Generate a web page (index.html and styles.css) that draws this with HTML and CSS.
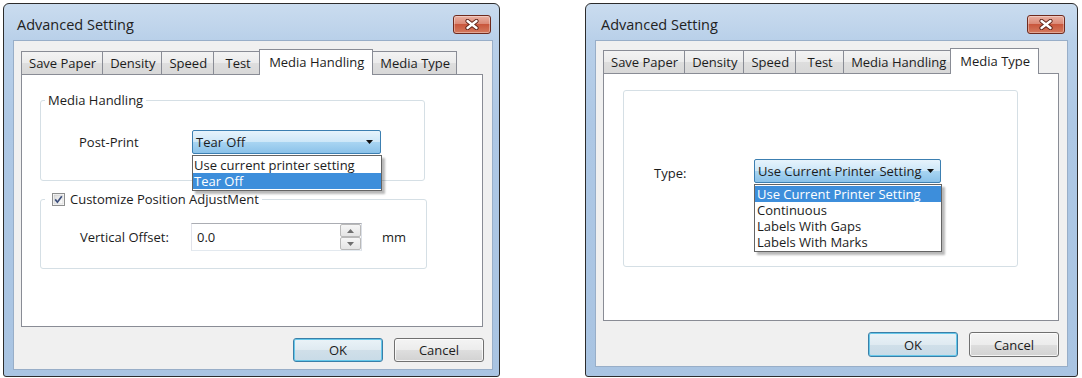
FILE: index.html
```html
<!DOCTYPE html>
<html lang="en">
<head>
    <meta charset="UTF-8">
    <title>Advanced Setting</title>
    <link rel="stylesheet" href="styles.css">
</head>
<body>

<div class="desk">

    <!-- Media Handling tab -->
    <section class="dlg dlg-a">
        <header class="titlebar">
            <span class="title">Advanced Setting</span>
            <button class="close" aria-label="Close">
                <svg width="16" height="11" viewBox="0 0 16 11">
                    <path d="M3.5 2 L12.5 9 M12.5 2 L3.5 9" stroke="#5e2318" stroke-width="4.2" stroke-linecap="round"/>
                    <path d="M3.5 2 L12.5 9 M12.5 2 L3.5 9" stroke="#ffffff" stroke-width="2.4" stroke-linecap="round"/>
                </svg>
            </button>
        </header>
        <div class="client">
            <div class="tabs">
                <span class="tab">Save Paper</span>
                <span class="tab">Density</span>
                <span class="tab">Speed</span>
                <span class="tab">Test</span>
                <span class="tab on">Media Handling</span>
                <span class="tab">Media Type</span>
            </div>
            <div class="panel">
                <fieldset class="group group-post">
                    <legend>Media Handling</legend>
                    <div class="row">
                        <span class="lbl lbl-post">Post-Print</span>
                        <div class="combo combo-post">
                            <span>Tear Off</span>
                            <svg class="arrow" width="7" height="4" viewBox="0 0 7 4"><path d="M0 0 H7 L3.5 4 Z" fill="#111"/></svg>
                            <ul class="droplist droplist-post">
                                <li>Use current printer setting</li>
                                <li class="sel">Tear Off</li>
                            </ul>
                        </div>
                    </div>
                </fieldset>
                <fieldset class="group group-offset">
                    <legend>
                        <svg class="chk" width="13" height="13" viewBox="0 0 13 13">
                            <defs>
                                <linearGradient id="chkfill" x1="0" y1="0" x2="1" y2="1">
                                    <stop offset="0" stop-color="#dcdcdc"/>
                                    <stop offset="1" stop-color="#ffffff"/>
                                </linearGradient>
                            </defs>
                            <rect x="0.5" y="0.5" width="12" height="12" fill="#fff" stroke="#8e8f8f"/>
                            <rect x="2" y="2" width="9" height="9" fill="url(#chkfill)" stroke="#c5c5c5" stroke-width="0.6"/>
                            <path d="M3.2 6.4 L5.4 9.2 L9.8 3.2" fill="none" stroke="#3d4f7c" stroke-width="1.7"/>
                        </svg>
                        <span>Customize Position AdjustMent</span>
                    </legend>
                    <div class="row">
                        <span class="lbl lbl-offset">Vertical Offset:</span>
                        <div class="spin">
                            <span class="spin-val">0.0</span>
                            <div class="spin-btns">
                                <span class="spin-btn"><svg width="7" height="4" viewBox="0 0 7 4"><path d="M0 4 H7 L3.5 0 Z" fill="#6f6f6f"/></svg></span>
                                <span class="spin-btn"><svg width="7" height="4" viewBox="0 0 7 4"><path d="M0 0 H7 L3.5 4 Z" fill="#6f6f6f"/></svg></span>
                            </div>
                        </div>
                        <span class="unit">mm</span>
                    </div>
                </fieldset>
            </div>
            <div class="buttons">
                <button class="btn default">OK</button>
                <button class="btn">Cancel</button>
            </div>
        </div>
    </section>

    <!-- Media Type tab -->
    <section class="dlg dlg-b">
        <header class="titlebar">
            <span class="title">Advanced Setting</span>
            <button class="close" aria-label="Close">
                <svg width="16" height="11" viewBox="0 0 16 11">
                    <path d="M3.5 2 L12.5 9 M12.5 2 L3.5 9" stroke="#5e2318" stroke-width="4.2" stroke-linecap="round"/>
                    <path d="M3.5 2 L12.5 9 M12.5 2 L3.5 9" stroke="#ffffff" stroke-width="2.4" stroke-linecap="round"/>
                </svg>
            </button>
        </header>
        <div class="client">
            <div class="tabs">
                <span class="tab">Save Paper</span>
                <span class="tab">Density</span>
                <span class="tab">Speed</span>
                <span class="tab">Test</span>
                <span class="tab">Media Handling</span>
                <span class="tab on">Media Type</span>
            </div>
            <div class="panel">
                <div class="group group-type">
                    <div class="row">
                        <span class="lbl lbl-type">Type:</span>
                        <div class="combo combo-type">
                            <span>Use Current Printer Setting</span>
                            <svg class="arrow" width="7" height="4" viewBox="0 0 7 4"><path d="M0 0 H7 L3.5 4 Z" fill="#111"/></svg>
                            <ul class="droplist droplist-type">
                                <li class="sel">Use Current Printer Setting</li>
                                <li>Continuous</li>
                                <li>Labels With Gaps</li>
                                <li>Labels With Marks</li>
                            </ul>
                        </div>
                    </div>
                </div>
            </div>
            <div class="buttons">
                <button class="btn default">OK</button>
                <button class="btn">Cancel</button>
            </div>
        </div>
    </section>

</div>

</body>
</html>
```

FILE: styles.css
```css
* {
    box-sizing: border-box;
}

body {
    margin: 0;
    background-color: #ffffff;
    font-family: "Open Sans", "Liberation Sans", sans-serif;
    font-size: 13px;
    line-height: 16px;
    color: #1c1c1c;
}

.desk {
    display: flex;
    gap: 85px;
    padding: 3px 0 0 3px;
}

/* window frame */
.dlg {
    height: 374px;
    display: flex;
    flex-direction: column;
    border: 1px solid #2c2c2c;
    border-radius: 6px 6px 3px 3px;
    background: linear-gradient(#cadcef, #b9d0e9 36px, #aec8e5 120px, #a9c4e2);
}

.dlg-a {
    width: 497px;
    padding: 0 6px 6px 9px;
}

.dlg-b {
    width: 493px;
    padding: 0 9px 9px 9px;
}

.titlebar {
    height: 36px;
    flex: none;
    display: flex;
    align-items: center;
    justify-content: space-between;
    padding: 5px 2px 0 4px;
}

.dlg-b .titlebar {
    padding: 5px 3px 0 6px;
}

.title {
    font-size: 14.5px;
    color: #222;
}

.close {
    width: 38px;
    height: 19px;
    padding: 0;
    display: flex;
    align-items: center;
    justify-content: center;
    border: 1px solid #6e2a1e;
    border-radius: 3px;
    background: linear-gradient(#eab0a2, #db8a77 45%, #c9573d 50%, #d47a5e);
    box-shadow: inset 0 0 0 1px rgba(255, 255, 255, 0.35);
}

/* client area */
.client {
    flex: 1;
    display: flex;
    flex-direction: column;
    background-color: #f0f0f0;
    border: 1px solid #98aec8;
    padding: 8px 8px 7px 7px;
}

.dlg-b .client {
    padding: 7px 8px 9px 7px;
}

.tabs {
    height: 25px;
    flex: none;
    display: flex;
    align-items: flex-end;
    position: relative;
    z-index: 1;
}

.tab {
    height: 23px;
    min-width: 49px;
    padding: 0 6px 0 7px;
    margin-right: -1px;
    border: 1px solid #898c95;
    border-bottom: none;
    background: linear-gradient(#f3f3f3, #ebebeb 50%, #dedede 50%, #d8d8d8);
    line-height: 22px;
    text-align: center;
    white-space: nowrap;
}

.tab.on {
    height: 26px;
    margin: 0 -1px -1px -2px;
    padding: 0 8px 0 9px;
    background: #ffffff;
    line-height: 24px;
    position: relative;
}

.panel {
    flex: 1;
    background-color: #ffffff;
    border: 1px solid #898c95;
}

.dlg-a .panel {
    margin-right: 1px;
}

/* group boxes */
.group {
    border: 1px solid #d5dfe5;
    border-radius: 3px;
    margin: 0;
}

.group legend {
    padding: 0 3px;
    display: flex;
    align-items: center;
    height: 16px;
}

.group-post {
    width: 385px;
    margin: 17px 0 0 18px;
    padding: 22px 0 26px 4px;
}

.group-offset {
    width: 387px;
    margin: 10px 0 0 18px;
    padding: 16px 0 17px 4px;
}

.group-type {
    width: 395px;
    height: 177px;
    margin: 16px 0 0 19px;
    padding: 68px 0 0 30px;
}

.chk {
    margin: 0 5px 0 4px;
}

.row {
    display: flex;
    align-items: center;
}

.group-post .row {
    margin-left: 34px;
}

.group-offset .row {
    margin-left: 35px;
}

.lbl-post {
    width: 113px;
}

.lbl-offset {
    width: 111px;
}

.lbl-type {
    width: 100px;
    padding-top: 3px;
}

/* combo boxes */
.combo {
    height: 24px;
    position: relative;
    display: flex;
    align-items: center;
    justify-content: space-between;
    padding: 0 7px 0 3px;
    border: 1px solid #3c7fb1;
    border-radius: 2px;
    background: linear-gradient(#e6f3fc, #cde7f8 50%, #a9d5f2 50%, #8bc2e9);
    white-space: nowrap;
}

.combo-post {
    width: 189px;
}

.combo-type {
    width: 187px;
    padding-right: 6px;
}

.droplist {
    position: absolute;
    top: calc(100% + 2px);
    left: -1px;
    width: calc(100% + 3px);
    margin: 0;
    padding: 1px 0;
    list-style: none;
    background-color: #ffffff;
    border: 1px solid #646464;
    box-shadow: 3px 3px 2px rgba(0, 0, 0, 0.28);
    z-index: 5;
}

.droplist li {
    height: 16px;
    padding: 0 2px;
}

.droplist-post li {
    padding-left: 1px;
}

.droplist li.sel {
    background-color: #3d8edb;
    color: #ffffff;
}

/* numeric box */
.spin {
    width: 171px;
    height: 28px;
    display: flex;
    align-items: center;
    justify-content: space-between;
    border: 1px solid;
    border-color: #abadb3 #dbdfe6 #e3e9ef #e2e3ea;
    background-color: #ffffff;
}

.spin-val {
    padding-left: 5px;
}

.spin-btns {
    display: flex;
    flex-direction: column;
    align-self: stretch;
}

.spin-btn {
    width: 21px;
    height: 13px;
    display: flex;
    align-items: center;
    justify-content: center;
    border: 1px solid #b9b9b9;
    border-radius: 2px;
    background: linear-gradient(#f6f6f6, #e4e4e4);
}

.unit {
    margin-left: 20px;
}

/* buttons */
.buttons {
    flex: none;
    display: flex;
    justify-content: flex-end;
    gap: 11px;
    margin-top: 11px;
}

.btn {
    width: 90px;
    height: 24px;
    padding: 0;
    font: inherit;
    color: #1c1c1c;
    border: 1px solid #707070;
    border-radius: 3px;
    background: linear-gradient(#f4f4f4, #ececec 50%, #dedede 50%, #d2d2d2);
    box-shadow: inset 0 0 0 1px rgba(255, 255, 255, 0.75);
}

.dlg-b .btn {
    height: 25px;
}

.btn.default {
    border-color: #3a7fa8;
    background: linear-gradient(#eaf3f8, #dfeaf1 50%, #d0dfe9 50%, #c8dbe7);
    box-shadow: inset 0 0 0 1px #66c8ea;
}
```
